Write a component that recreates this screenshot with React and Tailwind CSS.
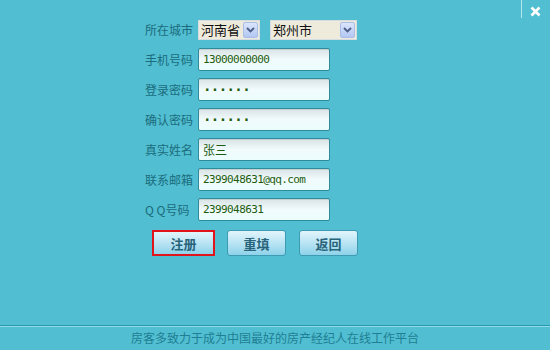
import React from "react";

const cjk = { fontFamily: '"SimSun","Noto Sans CJK SC",sans-serif' };

function Select({ text, w }) {
  return (
    <div
      className={`flex items-center h-[20px] border border-[#d6dde0] bg-[#efebdc] ${w}`}
    >
      <span className="flex-1 pl-[2px] text-[13px] leading-none text-[#111]" style={cjk}>
        {text}
      </span>
      <span className="mr-[1px] flex h-[16px] w-[15px] items-center justify-center rounded-[2px] border border-[#a9bde6] bg-gradient-to-b from-[#dbe5fb] to-[#b3c7f2]">
        <svg width="9" height="6" viewBox="0 0 9 6">
          <path d="M1 1 L4.5 4.5 L8 1" fill="none" stroke="#4a5e88" strokeWidth="1.8" />
        </svg>
      </span>
    </div>
  );
}

function Field({ label, children }) {
  return (
    <div className="flex h-[23px] items-center">
      <div className="w-[53px] text-[12px] leading-none text-[#1b6c7d]" style={cjk}>
        {label}
      </div>
      {children}
    </div>
  );
}

function Input({ value, cn }) {
  return (
    <div className="flex h-[23px] w-[132px] items-center rounded-[2px] border border-[#2f8a9c] bg-gradient-to-b from-[#d9e3e5] via-[#f1fbfc] to-[#ecfdfd] pl-[4px] shadow-[inset_0_1px_0_#c5d0d3]">
      <span className={`leading-none text-[#1d5c10] ${cn}`}>{value}</span>
    </div>
  );
}

const mono = "font-['DejaVu_Sans_Mono',monospace] text-[11px] tracking-[-0.6px]";

function Btn({ text, active }) {
  return (
    <div
      className={`flex h-[26px] items-center justify-center ${
        active ? "w-[63px] border-2 border-[#e0141a]" : "w-[59px] rounded-[3px] border border-[#3b9bb3]"
      } bg-gradient-to-b from-[#e2f5fc] to-[#8ed2ea]`}
    >
      <span className="text-[13px] font-bold leading-none text-[#27647a]" style={cjk}>
        {text}
      </span>
    </div>
  );
}

export default function App() {
  return (
    <div className="relative flex h-[350px] w-[550px] flex-col overflow-hidden bg-[#51bed1]">
      <div className="absolute left-[521px] top-0 h-[18px] w-px bg-[#b5e7ef]" />
      <svg className="absolute left-[530px] top-[6px]" width="11" height="11" viewBox="0 0 11 11">
        <path d="M1.5 1.5 L9.5 9.5 M9.5 1.5 L1.5 9.5" stroke="#ffffff" strokeWidth="2.6" />
      </svg>
      <div className="flex flex-1 flex-col gap-[7px] pl-[145px] pt-[18px]">
        <Field label="所在城市">
          <div className="flex items-center gap-[10px]">
            <Select text="河南省" w="w-[62px]" />
            <Select text="郑州市" w="w-[87px]" />
          </div>
        </Field>
        <Field label="手机号码">
          <Input value="13000000000" cn={mono} />
        </Field>
        <Field label="登录密码">
          <Input value="······" cn={mono + " font-bold text-[14px]"} />
        </Field>
        <Field label="确认密码">
          <Input value="······" cn={mono + " font-bold text-[14px]"} />
        </Field>
        <Field label="真实姓名">
          <Input value="张三" cn="text-[12px] font-['SimSun','Noto_Sans_CJK_SC',sans-serif]" />
        </Field>
        <Field label="联系邮箱">
          <Input value="2399048631@qq.com" cn={mono} />
        </Field>
        <Field label="Q Q号码">
          <Input value="2399048631" cn={mono} />
        </Field>
        <div className="mt-[2px] flex items-center pl-[7px]">
          <Btn text="注册" active />
          <div className="w-[12px]" />
          <Btn text="重填" />
          <div className="w-[13px]" />
          <Btn text="返回" />
        </div>
      </div>
      <div className="h-[25px] border-t border-[#2a98ad] shadow-[inset_0_1px_0_#8fdbe8] flex items-center justify-center">
        <span className="text-[12px] leading-none text-[#1f7e93]" style={cjk}>
          房客多致力于成为中国最好的房产经纪人在线工作平台
        </span>
      </div>
    </div>
  );
}
